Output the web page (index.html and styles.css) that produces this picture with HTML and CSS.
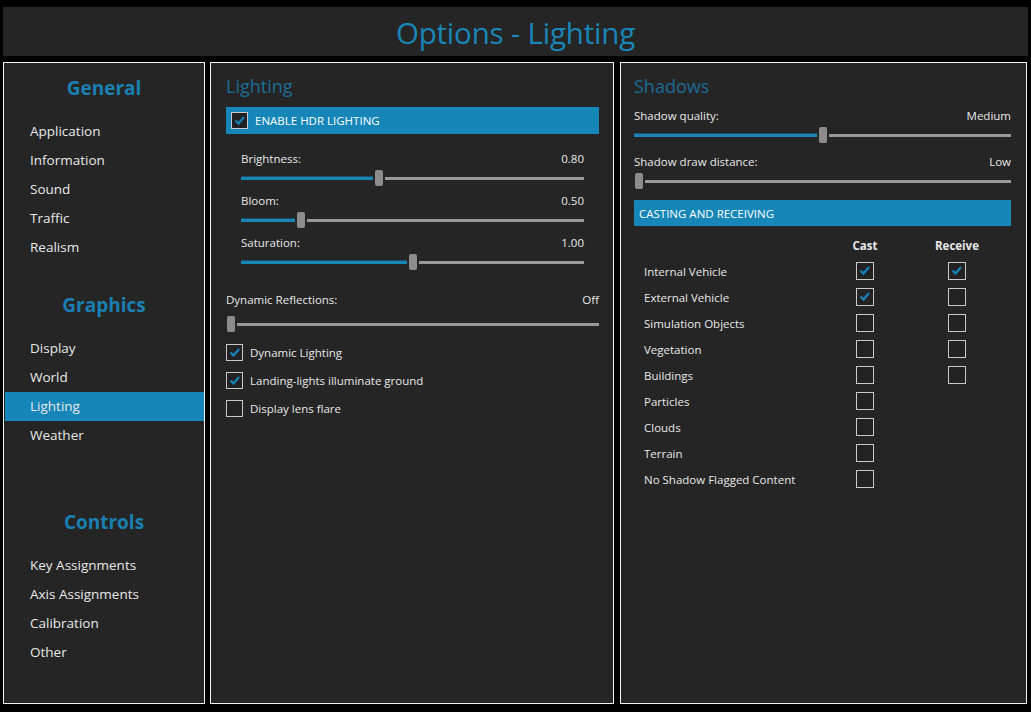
FILE: index.html
```html
<!DOCTYPE html>
<html lang="en">
<head>
    <meta charset="UTF-8">
    <title>Options - Lighting</title>
    <link rel="stylesheet" href="styles.css">
</head>
<body>
    <header class="title-bar">
        <h1>Options - Lighting</h1>
    </header>

    <div class="main">
        <nav class="panel nav">
            <h2>General</h2>
            <ul>
                <li>Application</li>
                <li>Information</li>
                <li>Sound</li>
                <li>Traffic</li>
                <li>Realism</li>
            </ul>
            <h2 class="graphics">Graphics</h2>
            <ul>
                <li>Display</li>
                <li>World</li>
                <li class="active">Lighting</li>
                <li>Weather</li>
            </ul>
            <h2 class="controls">Controls</h2>
            <ul>
                <li>Key Assignments</li>
                <li>Axis Assignments</li>
                <li>Calibration</li>
                <li>Other</li>
            </ul>
        </nav>

        <section class="panel lighting">
            <h3>Lighting</h3>
            <div class="band">
                <span class="check on"><svg viewBox="0 0 17 17"><path d="M4.5 8.5 L7.5 11.5 L13 5"/></svg></span>
                ENABLE HDR LIGHTING
            </div>
            <div class="hdr-sliders">
                <div class="slider">
                    <div class="slider-label"><span>Brightness:</span><span>0.80</span></div>
                    <div class="track"><div class="fill" style="width: 40.1%"></div><div class="thumb" style="left: calc(40.1% - 3.2px)"></div></div>
                </div>
                <div class="slider">
                    <div class="slider-label"><span>Bloom:</span><span>0.50</span></div>
                    <div class="track"><div class="fill" style="width: 16.8%"></div><div class="thumb" style="left: calc(16.8% - 1.3px)"></div></div>
                </div>
                <div class="slider">
                    <div class="slider-label"><span>Saturation:</span><span>1.00</span></div>
                    <div class="track"><div class="fill" style="width: 50%"></div><div class="thumb" style="left: calc(50% - 4px)"></div></div>
                </div>
            </div>
            <div class="slider reflections">
                <div class="slider-label"><span>Dynamic Reflections:</span><span>Off</span></div>
                <div class="track"><div class="thumb" style="left: 1px"></div></div>
            </div>
            <ul class="options">
                <li><span class="check on"><svg viewBox="0 0 17 17"><path d="M4.5 8.5 L7.5 11.5 L13 5"/></svg></span>Dynamic Lighting</li>
                <li><span class="check on"><svg viewBox="0 0 17 17"><path d="M4.5 8.5 L7.5 11.5 L13 5"/></svg></span>Landing-lights illuminate ground</li>
                <li><span class="check"></span>Display lens flare</li>
            </ul>
        </section>

        <section class="panel shadows">
            <h3>Shadows</h3>
            <div class="slider">
                <div class="slider-label"><span>Shadow quality:</span><span>Medium</span></div>
                <div class="track"><div class="fill" style="width: 50%"></div><div class="thumb" style="left: calc(50% - 4px)"></div></div>
            </div>
            <div class="slider">
                <div class="slider-label"><span>Shadow draw distance:</span><span>Low</span></div>
                <div class="track"><div class="thumb" style="left: 1px"></div></div>
            </div>
            <div class="band thin">CASTING AND RECEIVING</div>
            <div class="cast-table">
                <span></span><span class="col-head">Cast</span><span class="col-head">Receive</span>

                <span class="row-label">Internal Vehicle</span>
                <span class="cell"><span class="check on"><svg viewBox="0 0 17 17"><path d="M4.5 8.5 L7.5 11.5 L13 5"/></svg></span></span>
                <span class="cell"><span class="check on"><svg viewBox="0 0 17 17"><path d="M4.5 8.5 L7.5 11.5 L13 5"/></svg></span></span>

                <span class="row-label">External Vehicle</span>
                <span class="cell"><span class="check on"><svg viewBox="0 0 17 17"><path d="M4.5 8.5 L7.5 11.5 L13 5"/></svg></span></span>
                <span class="cell"><span class="check"></span></span>

                <span class="row-label">Simulation Objects</span>
                <span class="cell"><span class="check"></span></span>
                <span class="cell"><span class="check"></span></span>

                <span class="row-label">Vegetation</span>
                <span class="cell"><span class="check"></span></span>
                <span class="cell"><span class="check"></span></span>

                <span class="row-label">Buildings</span>
                <span class="cell"><span class="check"></span></span>
                <span class="cell"><span class="check"></span></span>

                <span class="row-label">Particles</span>
                <span class="cell"><span class="check"></span></span>
                <span></span>

                <span class="row-label">Clouds</span>
                <span class="cell"><span class="check"></span></span>
                <span></span>

                <span class="row-label">Terrain</span>
                <span class="cell"><span class="check"></span></span>
                <span></span>

                <span class="row-label">No Shadow Flagged Content</span>
                <span class="cell"><span class="check"></span></span>
                <span></span>
            </div>
        </section>
    </div>
</body>
</html>
```

FILE: styles.css
```css
* {
    box-sizing: border-box;
}

body {
    margin: 0;
    width: 1031px;
    height: 712px;
    overflow: hidden;
    background-color: #000;
    font-family: "Open Sans", "Noto Sans", sans-serif;
    color: #e8e8e8;
}

ul {
    list-style: none;
    margin: 0;
    padding: 0;
}

.title-bar {
    margin: 7px 3px 0;
    height: 49px;
    background-color: #252525;
    display: flex;
    justify-content: center;
    align-items: center;
}

.title-bar h1 {
    margin: 2px 0 0;
    font-size: 29.5px;
    font-weight: 400;
    color: #1a86b8;
    letter-spacing: -0.2px;
}

.main {
    display: flex;
    gap: 5px;
    padding: 6px 4px 0 3px;
    height: 648px;
}

.panel {
    background-color: #252525;
    border: 1px solid #f2f2f2;
    height: 642px;
}

/* left navigation */
.nav {
    width: 202px;
    flex-shrink: 0;
}

.nav h2 {
    margin: 10px 0 14px;
    height: 30px;
    line-height: 30px;
    text-align: center;
    font-size: 19px;
    font-weight: 700;
    color: #1a80b2;
}

.nav h2.graphics {
    margin-top: 28px;
}

.nav h2.controls {
    margin-top: 57px;
}

.nav li {
    height: 29px;
    line-height: 29px;
    padding-left: 25px;
    margin-left: 1px;
    font-size: 13.5px;
}

.nav li.active {
    background-color: #1686b8;
}

/* content panels */
.lighting {
    width: 404px;
    flex-shrink: 0;
    padding: 0 14px 0 15px;
}

.shadows {
    flex: 1;
    margin-left: 1px;
    padding: 0 15px 0 13px;
}

.panel h3 {
    margin: 10px 0 8px;
    height: 26px;
    line-height: 26px;
    font-size: 18px;
    font-weight: 400;
    color: #1c6d96;
}

.band {
    height: 27px;
    background-color: #1686b8;
    display: flex;
    align-items: center;
    gap: 7px;
    padding-left: 5px;
    font-size: 11.5px;
    color: #fff;
}

.band.thin {
    height: 26px;
    margin-top: 9px;
}

.check {
    width: 17px;
    height: 17px;
    flex-shrink: 0;
    border: 1px solid #c9c9c9;
    background-color: #222;
    display: inline-block;
}

.check svg {
    display: block;
    margin: -1px 0 0 -1px;
    width: 17px;
    height: 17px;
}

.check path {
    fill: none;
    stroke: #1a7fb5;
    stroke-width: 2.4;
}

/* sliders */
.slider-label {
    display: flex;
    justify-content: space-between;
    height: 18px;
    line-height: 18px;
    font-size: 11.5px;
}

.track {
    position: relative;
    height: 20px;
}

.track::before {
    content: "";
    position: absolute;
    left: 0;
    right: 0;
    top: 9px;
    height: 3px;
    background-color: #999;
}

.fill {
    position: absolute;
    left: 0;
    top: 8px;
    height: 4px;
    background-color: #1a86b8;
    border-top: 1px solid #1b4f69;
}

.thumb {
    position: absolute;
    top: 2px;
    width: 8px;
    height: 16px;
    border-radius: 2px;
    background-color: #8c8c8c;
    box-shadow: 0 0 0 2px #252525;
}

.hdr-sliders {
    padding: 16px 15px 0;
}

.hdr-sliders .slider {
    margin-bottom: 4px;
}

.reflections {
    margin-top: 19px;
}

.reflections .track {
    margin-top: 5px;
}

.options {
    margin-top: 4px;
}

.options li {
    height: 28px;
    display: flex;
    align-items: center;
    gap: 7px;
    font-size: 11.5px;
}

.shadows .slider {
    margin-top: 8px;
}

/* cast / receive table */
.cast-table {
    display: grid;
    grid-template-columns: 175px 92px 92px;
    grid-auto-rows: 26px;
    margin-top: 6px;
    padding-left: 10px;
    align-items: center;
    font-size: 11.5px;
}

.col-head {
    text-align: center;
    font-weight: 700;
}

.cell {
    display: flex;
    justify-content: center;
}

.cell .check {
    width: 18px;
    height: 18px;
}
```
